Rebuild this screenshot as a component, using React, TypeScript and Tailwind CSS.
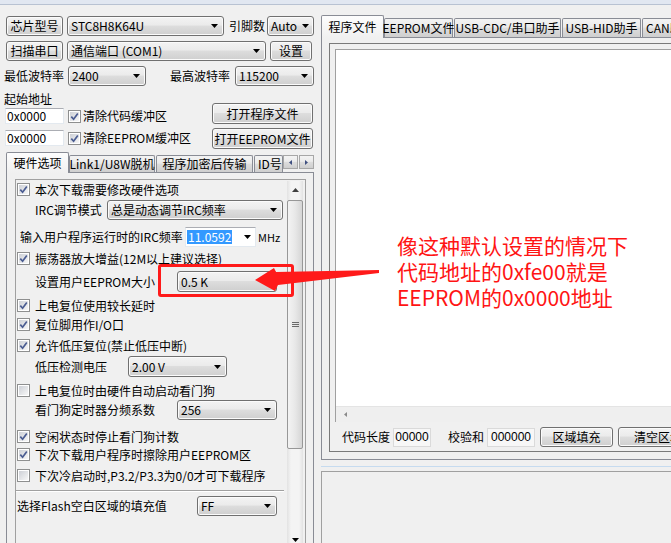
import React from "react";

type P = { children?: React.ReactNode; className?: string };

const glossy =
  "bg-[linear-gradient(#f3f3f3,#ebebeb_45%,#dddddd_50%,#cfcfcf)]";

const DownTri = () => (
  <svg width="7" height="4" viewBox="0 0 7 4" className="shrink-0">
    <path d="M0 0h7L3.5 4z" fill="#000" />
  </svg>
);

const UpTri = () => (
  <svg width="7" height="4" viewBox="0 0 7 4" className="shrink-0">
    <path d="M0 4h7L3.5 0z" fill="#404040" />
  </svg>
);

const SideTri = ({ left, color }: { left?: boolean; color: string }) => (
  <svg width="3" height="5" viewBox="0 0 3 5" className="shrink-0">
    <path d={left ? "M3 0v5L0 2.5z" : "M0 0v5L3 2.5z"} fill={color} />
  </svg>
);

const Button = ({ children, className = "" }: P) => (
  <div
    className={`flex items-center justify-center rounded-[3px] border border-[#707070] ${glossy} shadow-[inset_0_0_0_1px_#fbfbfb] whitespace-nowrap ${className}`}
  >
    {children}
  </div>
);

const Combo = ({ children, className = "" }: P) => (
  <div
    className={`flex items-center justify-between rounded-[3px] border border-[#707070] ${glossy} shadow-[inset_0_0_0_1px_#fbfbfb] pl-[3px] pr-[5px] ${className}`}
  >
    <span className="whitespace-nowrap">{children}</span>
    <DownTri />
  </div>
);

const Input = ({ children, className = "" }: P) => (
  <div
    className={`flex items-center bg-white border border-[#e3e9ef] border-t-[#abadb3] pl-[1px] ${className}`}
  >
    {children}
  </div>
);

const Check = ({ checked, className = "" }: { checked?: boolean; className?: string }) => (
  <div className={`w-[13px] h-[13px] shrink-0 border border-[#8e8f8f] bg-white p-[1px] ${className}`}>
    <div className="w-full h-full bg-[linear-gradient(135deg,#cdd0d6,#f7f7f7)] flex items-center justify-center">
      {checked && (
        <svg width="9" height="9" viewBox="0 0 9 9">
          <path d="M1.3 4.6 L3.6 7.2 L7.8 1.4" fill="none" stroke="#4a5c91" strokeWidth="1.7" />
        </svg>
      )}
    </div>
  </div>
);

const CheckRow = ({ children, checked = true, className = "" }: P & { checked?: boolean }) => (
  <div className={`flex items-center h-[15px] pl-[1px] ${className}`}>
    <Check checked={checked} />
    <span className="ml-[5px] whitespace-nowrap">{children}</span>
  </div>
);

const Tab = ({ children, className = "" }: P) => (
  <div
    className={`flex items-center justify-center border border-b-0 border-[#898c95] rounded-t-[2px] ${glossy} whitespace-nowrap ${className}`}
  >
    {children}
  </div>
);

const ActiveTab = ({ children, className = "" }: P) => (
  <div
    className={`-mb-[1px] flex items-center justify-center border border-b-0 border-[#898c95] rounded-t-[2px] bg-[linear-gradient(#fdfdfd,#f0f0f0)] pb-[1px] whitespace-nowrap ${className}`}
  >
    {children}
  </div>
);

const VScroll = () => (
  <div className="w-[16px] mt-[1px] mr-[2px] flex flex-col bg-[linear-gradient(90deg,#e2e2e2,#f4f4f4_25%,#f4f4f4_75%,#e2e2e2)]">
    <div className="h-[17px] flex items-center justify-center">
      <UpTri />
    </div>
    <div className="mt-[2px] h-[249px] rounded-[2px] border border-[#979797] bg-[linear-gradient(90deg,#f3f3f3,#e8e8e8_50%,#d5d5d5)] flex items-center justify-center">
      <svg width="7" height="6" viewBox="0 0 7 6">
        <path d="M0 .5h7M0 2.5h7M0 4.5h7" stroke="#6a6a6a" strokeWidth="1" />
      </svg>
    </div>
    <div className="flex-1" />
    <div className="h-[17px] flex items-center justify-center">
      <DownTri />
    </div>
  </div>
);

const LeftPane = () => (
  <div className="w-[316px] shrink-0 pt-[11px]">
    <div className="flex items-center h-[20px] pl-[6px]">
      <Button className="w-[57px] h-[20px]">芯片型号</Button>
      <Combo className="ml-[4px] w-[157px] h-[20px]">STC8H8K64U</Combo>
      <span className="ml-[5px] w-[36px]">引脚数</span>
      <Combo className="ml-[2px] w-[47px] h-[20px] !pr-[4px]">Auto</Combo>
    </div>
    <div className="mt-[5px] flex items-center h-[20px] pl-[6px]">
      <Button className="w-[57px] h-[20px]">扫描串口</Button>
      <Combo className="ml-[4px] w-[199px] h-[20px]">通信端口 (COM1)</Combo>
      <Button className="ml-[4px] w-[42px] h-[20px]">设置</Button>
    </div>
    <div className="mt-[5px] flex items-center h-[20px] pl-[4px]">
      <span className="w-[60px]">最低波特率</span>
      <Combo className="ml-[4px] w-[78px] h-[20px]">2400</Combo>
      <span className="ml-[24px] w-[60px]">最高波特率</span>
      <Combo className="ml-[5px] w-[79px] h-[20px]">115200</Combo>
    </div>

    <div className="mt-[6px] flex">
      <div className="w-[200px]">
        <div className="pl-[4px] h-[14px]">起始地址</div>
        <div className="mt-[2px] flex items-center h-[16px]">
          <Input className="ml-[5px] w-[59px] h-[16px]">0x0000</Input>
          <Check checked className="ml-[4px]" />
          <span className="ml-[2px]">清除代码缓冲区</span>
        </div>
        <div className="mt-[6px] flex items-center h-[16px]">
          <Input className="ml-[5px] w-[59px] h-[16px]">0x0000</Input>
          <Check checked className="ml-[4px]" />
          <span className="ml-[2px]">清除EEPROM缓冲区</span>
        </div>
      </div>
      <div className="ml-auto mr-[3px] flex flex-col">
        <Button className="mt-[11px] w-[101px] h-[21px]">打开程序文件</Button>
        <Button className="mt-[4px] w-[101px] h-[21px]">打开EEPROM文件</Button>
      </div>
    </div>

    <div className="mt-[3px] flex items-end h-[20px] pl-[6px] relative z-10">
      <ActiveTab className="w-[63px] h-[21px]">硬件选项</ActiveTab>
      <Tab className="w-[86px] h-[17px]">Link1/U8W脱机</Tab>
      <Tab className="ml-[1px] w-[97px] h-[17px]">程序加密后传输</Tab>
      <Tab className="ml-[1px] w-[29px] h-[17px] !justify-start pl-[3px] overflow-hidden">ID号</Tab>
      <div className="mb-[3px] flex gap-[1px]">
        <div className={`w-[15px] h-[14px] border border-[#a7a7a7] ${glossy} flex items-center justify-center`}>
          <SideTri left color="#3f4f80" />
        </div>
        <div className={`w-[15px] h-[14px] border border-[#a7a7a7] ${glossy} flex items-center justify-center`}>
          <SideTri color="#3f4f80" />
        </div>
      </div>
    </div>

    <div className="ml-[6px] w-[308px] h-[380px] border border-[#898c95] bg-[#f0f0f0] pt-[6px] pl-[8px]">
      <div className="w-[291px] h-[370px] border border-[#a0a0a0] flex">
        <div className="flex-1 flex flex-col">
          <CheckRow className="mt-[2px]">本次下载需要修改硬件选项</CheckRow>
          <div className="mt-[3px] flex items-center h-[20px] pl-[19px]">
            <span className="w-[72px]">IRC调节模式</span>
            <Combo className="w-[176px] h-[20px]">总是动态调节IRC频率</Combo>
          </div>
          <div className="mt-[7px] flex items-center h-[20px] pl-[4px]">
            <span className="w-[165px] whitespace-nowrap">输入用户程序运行时的IRC频率</span>
            <div className="w-[71px] h-[20px] bg-white border border-[#e3e9ef] border-t-[#abadb3] flex items-center justify-between pl-[1px] pr-[4px]">
              <span className="bg-[#3399ff] text-white px-[1px]">11.0592</span>
              <DownTri />
            </div>
            <span className="ml-[2px] text-[11px]">MHz</span>
          </div>
          <CheckRow className="mt-[4px]">振荡器放大增益(12M以上建议选择)</CheckRow>
          <div className="mt-[5px] flex items-center h-[21px] pl-[19px]">
            <span className="w-[142px]">设置用户EEPROM大小</span>
            <Combo className="w-[100px] h-[21px]">0.5 K</Combo>
          </div>
          <CheckRow className="mt-[6px]">上电复位使用较长延时</CheckRow>
          <CheckRow className="mt-[4px]">复位脚用作I/O口</CheckRow>
          <CheckRow className="mt-[6px]">允许低压复位(禁止低压中断)</CheckRow>
          <div className="mt-[3px] flex items-center h-[21px] pl-[19px]">
            <span className="w-[93px]">低压检测电压</span>
            <Combo className="w-[99px] h-[21px]">2.00 V</Combo>
          </div>
          <CheckRow checked={false} className="mt-[6px]">
            上电复位时由硬件自动启动看门狗
          </CheckRow>
          <div className="mt-[2px] flex items-center h-[20px] pl-[19px]">
            <span className="w-[142px]">看门狗定时器分频系数</span>
            <Combo className="w-[100px] h-[20px]">256</Combo>
          </div>
          <CheckRow className="mt-[9px]">空闲状态时停止看门狗计数</CheckRow>
          <CheckRow className="mt-[3px]">下次下载用户程序时擦除用户EEPROM区</CheckRow>
          <CheckRow checked={false} className="mt-[6px]">
            下次冷启动时,P3.2/P3.3为0/0才可下载程序
          </CheckRow>
          <div className="mt-[7px] w-[268px] h-[2px] border-t border-b border-t-[#a0a0a0] border-b-white" />
          <div className="mt-[4px] flex items-center h-[20px] pl-[1px]">
            <span className="w-[180px]">选择Flash空白区域的填充值</span>
            <Combo className="w-[80px] h-[20px]">FF</Combo>
          </div>
        </div>
        <VScroll />
      </div>
    </div>
  </div>
);

const Field = ({ children, className = "" }: P) => (
  <div
    className={`h-[19px] flex items-center justify-center border border-[#dadada] bg-[#f7f7f7] font-['Liberation_Sans',sans-serif] ${className}`}
  >
    {children}
  </div>
);

const RightPane = () => (
  <div className="w-[400px] shrink-0 pt-[10px] pl-[5px]">
    <div className="flex items-end h-[22px] relative z-10">
      <ActiveTab className="w-[63px] h-[23px]">程序文件</ActiveTab>
      <Tab className="w-[69px] h-[19px]">EEPROM文件</Tab>
      <Tab className="ml-[1px] w-[107px] h-[19px]">USB-CDC/串口助手</Tab>
      <Tab className="ml-[1px] w-[79px] h-[19px]">USB-HID助手</Tab>
      <Tab className="ml-[1px] w-[70px] h-[19px] !justify-start pl-[3px]">CAN助手</Tab>
    </div>
    <div className="h-[423px] border border-[#898c95] bg-[#f0f0f0] pt-[5px] pl-[7px]">
      <div className="h-[409px] border border-[#7a7a7a] border-r-0 pt-[5px] pl-[5px] flex flex-col">
        <div className="h-[373px] border-l border-t border-[#a0a0a0] bg-white flex flex-col">
          <div className="flex-1" />
          <div className="h-[16px] bg-[#efefef] border-t border-[#e4e4e4] flex items-center pl-[8px]">
            <SideTri left color="#8a8a8a" />
          </div>
        </div>
        <div className="mt-[5px] flex items-center h-[20px] pl-[7px]">
          <span className="w-[48px]">代码长度</span>
          <Field className="ml-[3px] w-[38px]">00000</Field>
          <span className="ml-[17px] w-[36px]">校验和</span>
          <Field className="ml-[3px] w-[48px]">000000</Field>
          <Button className="ml-[5px] w-[73px] h-[20px]">区域填充</Button>
          <Button className="ml-[5px] w-[80px] h-[20px]">清空区域</Button>
        </div>
      </div>
    </div>
    <div className="mt-[6px] h-[1px] bg-[#c6dbef]" />
    <div className="mt-[4px] h-[100px] border-l border-t border-[#a0a0a0] bg-[#f0f0f0]" />
  </div>
);

const Annotation = () => (
  <>
    <div className="absolute left-[158px] top-[264px] w-[136px] h-[33px] border-[3px] border-[#ff1a1a] rounded-[3px]" />
    <svg
      className="absolute left-[250px] top-[262px] pointer-events-none"
      width="132"
      height="32"
      viewBox="250 262 132 32"
    >
      <polygon
        points="255,280 274,268 276,272 379,270 379,273 278,285 275,291"
        fill="#ff1a1a"
      />
    </svg>
    <div className="absolute left-[397px] top-[232px] text-[21px] leading-[26px] text-[#ff1414] whitespace-nowrap">
      <div>像这种默认设置的情况下</div>
      <div>代码地址的0xfe00就是</div>
      <div>EEPROM的0x0000地址</div>
    </div>
  </>
);

export default function App() {
  return (
    <div className="relative w-[671px] h-[543px] overflow-hidden bg-[#f0f0f0] text-[12px] leading-[14px] text-black font-['Noto_Sans_CJK_SC',sans-serif]">
      <div className="h-[5px] bg-[#e1e7f1] border-b border-[#b8c2d2]" />
      <div className="flex">
        <LeftPane />
        <RightPane />
      </div>
      <Annotation />
    </div>
  );
}
